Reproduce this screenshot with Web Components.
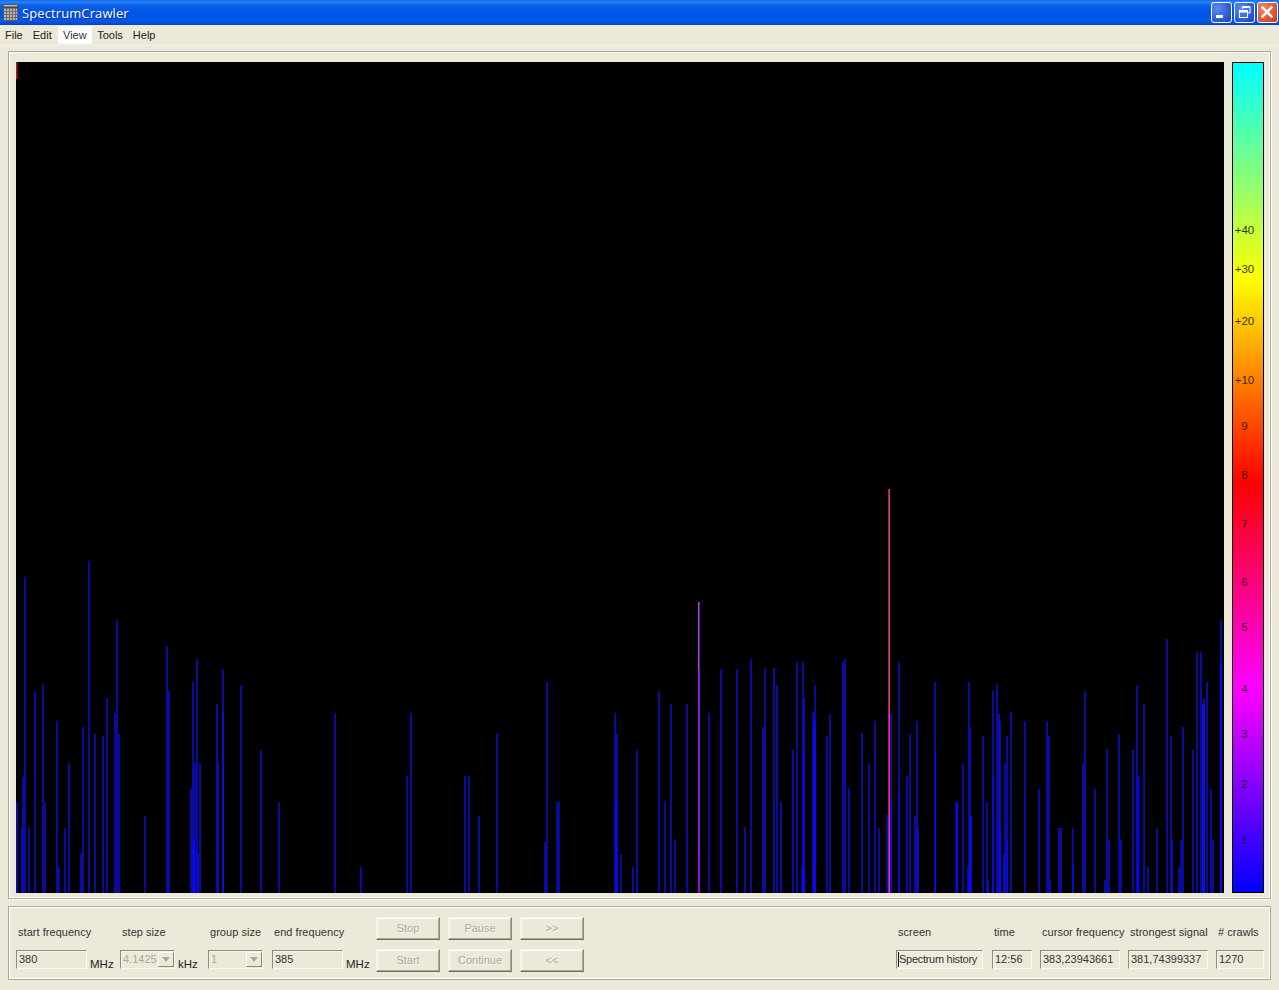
<!DOCTYPE html>
<html lang="en"><head><meta charset="utf-8"><title>SpectrumCrawler</title>
<style>
html,body{margin:0;padding:0;background:#ece9d8}
body{width:1279px;height:990px;overflow:hidden;font:11px "Liberation Sans",Arial,sans-serif;color:#2a2a2a}
</style></head><body>
<xp-app>
  <xp-titlebar slot="title">SpectrumCrawler</xp-titlebar>
  <xp-menubar slot="menu">
    <xp-menu-item>File</xp-menu-item><xp-menu-item>Edit</xp-menu-item><xp-menu-item active>View</xp-menu-item><xp-menu-item>Tools</xp-menu-item><xp-menu-item>Help</xp-menu-item>
  </xp-menubar>
  <xp-groupbox slot="main" class="top"><spectrum-view></spectrum-view><color-scale></color-scale></xp-groupbox>
  <xp-controls slot="controls">
    <labeled-control slot="left" w="104" label="start frequency" unit="MHz"><xp-field w="71">380</xp-field></labeled-control>
    <labeled-control slot="left" w="88" label="step size" unit="kHz"><xp-combo w="55" btn="17">4.1425</xp-combo></labeled-control>
    <labeled-control slot="left" w="64" label="group size"><xp-combo w="55" btn="17">1</xp-combo></labeled-control>
    <labeled-control slot="left" w="104" label="end frequency" unit="MHz"><xp-field w="71">385</xp-field></labeled-control>
    <xp-button slot="buttons">Stop</xp-button><xp-button slot="buttons">Pause</xp-button><xp-button slot="buttons">&gt;&gt;</xp-button>
    <xp-button slot="buttons">Start</xp-button><xp-button slot="buttons">Continue</xp-button><xp-button slot="buttons">&lt;&lt;</xp-button>
    <labeled-control slot="right" w="96" label="screen"><xp-field w="87" caret>Spectrum history</xp-field></labeled-control>
    <labeled-control slot="right" w="48" label="time"><xp-field w="40">12:56</xp-field></labeled-control>
    <labeled-control slot="right" w="88" label="cursor frequency"><xp-field w="80">383,23943661</xp-field></labeled-control>
    <labeled-control slot="right" w="88" label="strongest signal"><xp-field w="80">381,74399337</xp-field></labeled-control>
    <labeled-control slot="right" w="48" label="# crawls"><xp-field w="48">1270</xp-field></labeled-control>
  </xp-controls>
</xp-app>
<script>
function def(name, html, init){
  customElements.define(name, class extends HTMLElement{
    constructor(){super();this.attachShadow({mode:'open'}).innerHTML=typeof html==='function'?html(this):html;}
    connectedCallback(){ if(init) init(this); }
  });
}
def('xp-app',`<style>:host{display:flex;flex-direction:column;width:1279px;height:990px}
.body{display:flex;flex-direction:column;padding:5px 8px 0 8px;gap:7px}</style>
<slot name="title"></slot><slot name="menu"></slot><div class="body"><slot name="main"></slot><slot name="controls"></slot></div>`);

const BTN = `background:radial-gradient(circle at 30% 30%,#5a8cf0,#2a55d0 70%,#2348b8);`;
def('xp-caption-button',`<style>:host{display:block;width:21px;height:21px;box-sizing:border-box;border:1px solid #fff;border-radius:3px;${BTN}}
:host([red]){background:radial-gradient(circle at 30% 30%,#ee8a6a,#dc5030 65%,#c03818)}
svg{display:block}</style><svg width="19" height="19" viewBox="0 0 19 19"><slot></slot></svg>`,
 el=>{const k=el.getAttribute('kind');const g={min:'<rect x="4" y="12" width="7" height="3" fill="#fff"/>',
  max:'<g fill="none" stroke="#fff"><rect x="4.5" y="7.5" width="8" height="7"/><path d="M4.5 8.5h8" stroke-width="2"/><path d="M7.5 6V3.5h7.5V10h-2.5" /><path d="M7.5 4h7.5" stroke-width="2"/></g>',
  close:'<path d="M4.5 4.5l9 9M13.5 4.5l-9 9" stroke="#fff" stroke-width="2.4" stroke-linecap="square"/>'}[k];
  el.shadowRoot.querySelector('svg').innerHTML=g;});
def('xp-titlebar',`<style>:host{display:flex;align-items:center;height:25px;box-sizing:border-box;padding:0 1px 0 3px;
background:linear-gradient(#0a6af0 0,#2f86f8 2px,#0a62ea 5px,#0055e5 12px,#0258ea 20px,#0350d8 23px,#0840c8 25px);color:#fff;
font:13px "Open Sans","Liberation Sans",sans-serif;text-shadow:1px 1px 1px #0a2a90}
svg{display:block;margin-right:4px}.t{flex:1;letter-spacing:.1px}.b{display:flex;gap:2px}</style>
<svg width="15" height="17" viewBox="0 0 15 17"><rect x=".5" y=".5" width="14" height="16" fill="#b8b8b0" stroke="#5a5a60"/><path d="M.5 3.5h14" stroke="#444" stroke-width="2"/><path d="M3.5 4v12M6.5 4v12M9.5 4v12M12.5 4v12M1 7.5h13M1 10.5h13M1 13.5h13" stroke="#6c6c70"/></svg>
<span class="t"><slot></slot></span><span class="b"><xp-caption-button kind="min"></xp-caption-button><xp-caption-button kind="max"></xp-caption-button><xp-caption-button kind="close" red></xp-caption-button></span>`);
def('xp-menubar',`<style>:host{display:flex;height:21px;box-sizing:border-box;background:#ece9d8;padding:1px 0 1px;border-bottom:1px solid #f4f2e8}</style><slot></slot>`);
def('xp-menu-item',`<style>:host{display:block;padding:0 5px;line-height:19px;font-size:11px;color:#222}
:host([active]){background:#fff;color:#333;padding:0 5.5px 0 5px;margin-left:1.3px}</style><slot></slot>`);
def('xp-groupbox',`<style>:host{display:flex;box-sizing:border-box;height:848px;border:1px solid #aca899;outline:1px solid #fff;outline-offset:-2px;padding:10px 6px 5px 7px;gap:8px;box-shadow:1px 1px 0 #fff}</style><slot></slot>`);

const D='#1010f0',B='#0808f4';
const L=[[17,802],[22,828],[23,777],[25,577],[29,828],[35,691],[43,684],[45,802],[57,721],[59,867],[65,828],[69,763],[81,853],[83,727],[89,561],[95,734],[103,736],[107,698],[115,713],[117,620],[119,734],[145,816],[167,646],[169,691],[191,789],[193,682],[195,763],[197,659],[198,853],[200,763],[217,704],[218,763],[223,669],[241,685],[261,750],[279,802],
[335,713],[361,867],[407,776],[411,713],[465,776],[469,776],[479,816],[497,733],[545,842],[547,682],[557,802],[559,802],
[615,713],[617,734],[621,854],[633,867],[637,750],[659,691],[665,801],[671,704],[675,840],[687,704],[709,713],[721,669],[737,669],[751,659],[745,827],[763,727],[765,668],[774,668],[777,685],[781,802],[793,750],[797,662],[803,662],[804,698],[815,685],[813,712],[827,736],[830,714],[843,662],[845,659],[849,788],[862,733],[869,763],[875,721],[879,828],[887,815],[891,714],[899,662],
[907,776],[910,734],[915,816],[917,721],[918,828],[935,682],[963,763],[968,867],[969,682],[970,727],[983,736],[987,802],[988,880],[993,691],[997,684],[999,714],[1000,721],[1004,854],[1005,763],[1007,736],[1011,712],[1025,721],[1039,789],[1047,721],[1049,736],[1050,880],[1059,828],[1061,828],[1073,828],[1083,763],[1085,691],[1095,789],[1105,880],[1107,749],[1109,840],[1119,734],[1121,840],[1133,750],[1137,685],[1144,704],[1148,867],[1157,828],[1167,639],[1171,736],[1172,840],[1179,867],[1181,840],[1183,727],[1193,750],[1197,652],[1201,652],[1204,698],[1207,682],[1211,789],[1213,840],[1221,620]];
const H=[[192.5,840,2.5,B],[222.5,712,1.4,'#1010e0'],[615.5,802,2,B],[802.5,750,2,B],[801.5,867,3.5,B],[813.5,721,2.5,B],[890.5,802,1.5,B],[898.5,790,1.5,B],[934.5,750,1.5,B],[955.5,802,2.5,B],[970,816,2,B],[992.5,776,1.5,B],[998.5,828,2.5,B],[1006.5,842,1.5,B],[1072.5,867,1.5,B],[1137,776,2.5,B],[1202,704,3,'#1010d8'],[1220,662,2,B],
[698,602,1.5,'#b040f0'],[698,668,1.5,'#9020ff'],[698,853,2,'#8a10f0'],[888.4,489,1.5,'#ff3c90']];
def('spectrum-view',`<style>:host{display:block;width:1208px;height:831px;background:#000;flex:none}svg{display:block}</style>
<svg width="1208" height="831" viewBox="16 62 1208 831"></svg>`,el=>{
  let s='<rect x="16" y="62" width="1.5" height="17" fill="#c01414"/>';
  for(const [x,t] of L)s+=`<rect x="${x-.65}" y="${t}" width="1.3" height="${893-t}" fill="${D}"/>`;
  for(const [x,t,w,c] of H)s+=`<rect x="${x}" y="${t}" width="${w}" height="${893-t}" fill="${c}"/>`;
  el.shadowRoot.querySelector('svg').innerHTML=s;});
const T=[['+40',230],['+30',269],['+20',321],['+10',380],['9',426],['8',475],['7',524],['6',582],['5',627],['4',689],['3',734],['2',784],['1',840]];
def('color-scale',`<style>:host{display:block;position:relative;box-sizing:border-box;width:32px;height:831px;flex:none;border:1px solid #000;
background:linear-gradient(#00ffff 0,#ffff00 26%,#ff0000 50.6%,#ff00ff 75.4%,#0000ff 100%)}
span{position:absolute;left:0;width:23px;text-align:center;transform:translateY(-50%);line-height:12px;font-size:11.5px;color:#1c1c1c;opacity:.88}</style>`,el=>{
  if(el.shadowRoot.querySelector('span'))return;
  for(const [t,y] of T){const s=document.createElement('span');s.textContent=t;s.style.top=(y-63)+'px';el.shadowRoot.appendChild(s);}
});
const SUNK=`border:1px solid;border-color:#8f8d80 #fbfaf5 #fbfaf5 #8f8d80;box-shadow:inset 1px 1px 0 #f4f2e6`;
def('xp-field',`<style>:host{display:block;position:relative;box-sizing:border-box;height:19px;${SUNK};background:#ece9d8;padding-left:2px;line-height:16px;font-size:11px;color:#333;white-space:nowrap;overflow:hidden}
:host([caret]){letter-spacing:-.28px;background:#efecdd}
i{position:absolute;left:1px;top:1px;width:1px;height:15px;background:#111;display:none}:host([caret]) i{display:block}</style><i></i><slot></slot>`,
 el=>{el.style.width=el.getAttribute('w')+'px'});
def('xp-combo',`<style>:host{display:flex;box-sizing:border-box;height:19px;${SUNK};background:#ece9d8;padding-left:2px;line-height:16px;font-size:11px;color:#aaa99c;justify-content:space-between}
b{display:block;box-sizing:border-box;width:16px;height:15px;margin:1px 0 0;background:#ece9d8;border:1px solid;border-color:#f8f7f0 #8a8878 #8a8878 #f8f7f0;position:relative}
b:after{content:"";position:absolute;left:3px;top:4px;border:4px solid transparent;border-top:5px solid #aca899;border-bottom:0}</style><span><slot></slot></span><b></b>`,
 el=>{el.style.width=el.getAttribute('w')+'px'});
def('xp-button',`<style>:host{display:block;box-sizing:border-box;height:23px;width:64px;background:#ece9d8;border:1px solid;border-color:#f4f2e8 #8c8a7a #716f64 #f4f2e8;box-shadow:inset -1px -1px 0 #aca899,inset 1px 1px 0 #fff;text-align:center;line-height:20px;font-size:11px;color:#aaa99c;text-shadow:1px 1px 0 #f8f7f0}</style><slot></slot>`);
def('labeled-control',el=>`<style>:host{display:block;flex:none;width:${el.getAttribute('w')}px}
.l{display:block;height:16px;line-height:16px;padding-left:2px;margin-top:16px;margin-bottom:10px;white-space:nowrap;font-size:11px;letter-spacing:.04px;color:#333}
.r{display:flex}.u{margin:5px 0 0 3px;line-height:18px;font-size:11.5px;color:#222}</style>
<span class="l">${el.getAttribute('label')}</span><div class="r"><slot></slot>${el.getAttribute('unit')?`<span class="u">${el.getAttribute('unit')}</span>`:''}</div>`);
def('xp-controls',`<style>:host{display:flex;box-sizing:border-box;height:74px;border:1px solid #aca899;outline:1px solid #fff;outline-offset:-2px;padding:1px 6px 0 7px}
.g{display:flex}.btns{display:grid;grid-template-columns:repeat(3,64px);column-gap:8px;row-gap:9px;grid-auto-rows:23px;padding-top:9px}.right{margin-left:auto}</style>
<div class="g"><slot name="left"></slot></div><div class="btns"><slot name="buttons"></slot></div><div class="g right"><slot name="right"></slot></div>`);
</script>
</body></html>
